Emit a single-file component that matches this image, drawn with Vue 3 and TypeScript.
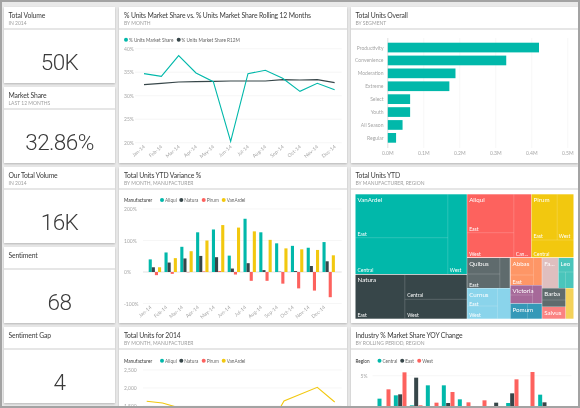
<template>
  <div class="dashboard">
    <template v-for="tile in tiles" :key="tile.title">
      <section class="tile" :class="{ wide: tile.kind !== 'kpi' }">
        <header class="tile-head">
          <h2>{{ tile.title }}</h2>
          <p v-if="tile.sub">{{ tile.sub }}</p>
        </header>

        <div v-if="tile.kind === 'kpi'" class="kpi">{{ tile.value }}</div>

        <svg v-else-if="tile.kind === 'share'" class="chart" viewBox="119 30 227.5 133">
          <circle cx="126" cy="39.7" r="2" :fill="TEAL" />
          <text class="legend" x="129" y="41.5">% Units Market Share</text>
          <circle cx="178.7" cy="39.7" r="2" :fill="DARK" />
          <text class="legend" x="181.5" y="41.5">% Units Market Share R12M</text>
          <g v-for="(t, i) in [40, 35, 30, 25, 20]" :key="t">
            <line class="grid" x1="135" x2="341.7" :y1="48.7 + i * 23.5" :y2="48.7 + i * 23.5" />
            <text class="axis" x="124" :y="50.7 + i * 23.5">{{ t }}%</text>
          </g>
          <text v-for="(m, i) in months" :key="m" class="axis" text-anchor="end"
            :transform="`translate(${145.5 + i * 17.33} 147.5) rotate(-40)`">{{ m }}</text>
          <polyline class="line" :stroke="DARK" :points="shareR12" />
          <polyline class="line" :stroke="TEAL" :points="share" />
        </svg>

        <svg v-else-if="tile.kind === 'segment'" class="chart" viewBox="350.5 30 227.5 133">
          <line v-for="i in 6" :key="i" class="grid" :x1="387.3 + (i - 1) * 36" :x2="387.3 + (i - 1) * 36" y1="38" y2="148" />
          <line x1="387.3" x2="387.3" y1="38" y2="148" stroke="#ccc" stroke-width="0.5" />
          <g v-for="(s, i) in segments" :key="s.name">
            <text class="axis" x="383" text-anchor="end" :y="49.5 + i * 12.9">{{ s.name }}</text>
            <rect :x="387.3" :y="42.7 + i * 12.9" :width="s.value * 360" height="9.7" :fill="TEAL" />
          </g>
          <text v-for="i in 6" :key="i" class="axis" text-anchor="middle" :x="387.3 + (i - 1) * 36" y="154.7">0.{{ i - 1 }}M</text>
        </svg>

        <svg v-else-if="tile.kind === 'variance'" class="chart" viewBox="119 190 227.5 133">
          <text class="legend strong" x="124" y="202">Manufacturer</text>
          <g v-for="l in makers" :key="l.name">
            <circle :cx="l.x" cy="200" r="2" :fill="l.color" />
            <text class="legend" :x="l.x + 3" y="202">{{ l.name }}</text>
          </g>
          <g v-for="(t, i) in [200, 100, 0, -100]" :key="t">
            <line class="grid" :class="{ zero: t === 0 }" x1="143" x2="341.7" :y1="209 + i * 31.5" :y2="209 + i * 31.5" />
            <text class="axis" x="124" :y="211 + i * 31.5">{{ t }}%</text>
          </g>
          <rect v-for="b in varianceBars" :key="b.key" :x="b.x" :y="b.y" width="3.1" :height="b.h" :fill="b.color" />
          <text v-for="(m, i) in months" :key="m" class="axis" text-anchor="end"
            :transform="`translate(${152 + i * 15.8} 308) rotate(-40)`">{{ m }}</text>
        </svg>

        <svg v-else-if="tile.kind === 'treemap'" class="chart" viewBox="350.5 190 227.5 133">
          <rect v-for="r in cells" :key="r.id" :x="r.x" :y="r.y" :width="r.w" :height="r.h" :fill="r.color" />
          <line v-for="(l, i) in cellLines" :key="i" class="cell-line" :x1="l[0]" :y1="l[1]" :x2="l[2]" :y2="l[3]" />
          <text v-for="t in cellLabels" :key="t.id" class="cell-label" :class="{ big: t.big }" :x="t.x" :y="t.y">{{ t.text }}</text>
        </svg>

        <svg v-else-if="tile.kind === 'units'" class="chart" viewBox="119 350 227.5 133">
          <text class="legend strong" x="124" y="362.5">Manufacturer</text>
          <g v-for="l in makers" :key="l.name">
            <circle :cx="l.x" cy="360.7" r="2" :fill="l.color" />
            <text class="legend" :x="l.x + 3" y="362.5">{{ l.name }}</text>
          </g>
          <g v-for="(t, i) in ['2,500', '2,000', '1,500']" :key="t">
            <line class="grid" x1="143" x2="341.7" :y1="370 + i * 18" :y2="370 + i * 18" />
            <text class="axis" x="124" :y="372 + i * 18">{{ t }}</text>
          </g>
          <polyline class="line" :stroke="YELLOW" points="146.7,401.3 162.5,403 178,407.5 200,416 265,416 280,408 284,401 317.3,387.3 334.7,402" />
        </svg>

        <svg v-else class="chart" viewBox="350.5 350 227.5 133">
          <text class="legend strong" x="355" y="362.5">Region</text>
          <g v-for="l in regions" :key="l.name">
            <circle :cx="l.x" cy="360.7" r="2" :fill="l.color" />
            <text class="legend" :x="l.x + 3" y="362.5">{{ l.name }}</text>
          </g>
          <line class="grid" x1="372" x2="571" y1="375.7" y2="375.7" />
          <text class="axis" x="360" y="377.7">5%</text>
          <rect v-for="b in yoyBars" :key="b.key" :x="b.x" :y="b.y" width="4" height="40" :fill="b.color" />
        </svg>
      </section>
    </template>
  </div>
</template>

<script setup lang="ts">
const TEAL = '#01b8aa'
const DARK = '#374649'
const RED = '#fd625e'
const YELLOW = '#f2c80f'

interface Tile {
  title: string
  sub?: string
  kind: string
  value?: string
}

const tiles: Tile[] = [
  { title: 'Total Volume', sub: 'IN 2014', kind: 'kpi', value: '50K' },
  { title: '% Units Market Share vs. % Units Market Share Rolling 12 Months', sub: 'BY MONTH', kind: 'share' },
  { title: 'Total Units Overall', sub: 'BY SEGMENT', kind: 'segment' },
  { title: 'Market Share', sub: 'LAST 12 MONTHS', kind: 'kpi', value: '32.86%' },
  { title: 'Our Total Volume', sub: 'IN 2014', kind: 'kpi', value: '16K' },
  { title: 'Total Units YTD Variance %', sub: 'BY MONTH, MANUFACTURER', kind: 'variance' },
  { title: 'Total Units YTD', sub: 'BY MANUFACTURER, REGION', kind: 'treemap' },
  { title: 'Sentiment', kind: 'kpi', value: '68' },
  { title: 'Sentiment Gap', kind: 'kpi', value: '4' },
  { title: 'Total Units for 2014', sub: 'BY MONTH, MANUFACTURER', kind: 'units' },
  { title: 'Industry % Market Share YOY Change', sub: 'BY ROLLING PERIOD, REGION', kind: 'yoy' }
]

const months = ['Jan-14', 'Feb-14', 'Mar-14', 'Apr-14', 'May-14', 'Jun-14', 'Jul-14', 'Aug-14', 'Sep-14', 'Oct-14', 'Nov-14', 'Dec-14']

const toPoints = (ys: number[]) => ys.map((y, i) => `${144 + i * 17.33},${y / 3}`).join(' ')
const share = toPoints([221, 229, 167, 219, 245, 424, 221, 211, 235, 274, 250, 269])
const shareR12 = toPoints([254, 250, 246, 245, 244, 243, 243, 243, 239, 240, 239, 248])

const segments = [
  { name: 'Productivity', value: 0.42 },
  { name: 'Convenience', value: 0.329 },
  { name: 'Moderation', value: 0.188 },
  { name: 'Extreme', value: 0.171 },
  { name: 'Select', value: 0.062 },
  { name: 'Youth', value: 0.062 },
  { name: 'All Season', value: 0.041 },
  { name: 'Regular', value: 0.023 }
]

const makers = [
  { name: 'Aliqui', color: TEAL, x: 162 },
  { name: 'Natura', color: DARK, x: 181.3 },
  { name: 'Pirum', color: RED, x: 203.7 },
  { name: 'VanArdel', color: YELLOW, x: 223.7 }
]

const regions = [
  { name: 'Central', color: TEAL, x: 379 },
  { name: 'East', color: DARK, x: 401.7 },
  { name: 'West', color: RED, x: 418.7 }
]

// aliqui, natura, pirum, vanardel per month
const variance = [
  [40, 15, -10, 15], [62, 30, -6, 44], [80, 43, -1, 66], [126, 51, 2, 100],
  [135, 47, 3, 149], [52, 11, -8, 141], [169, 28, -28, 129], [126, 6, -28, 102],
  [91, 1, -37, 75], [83, 3, -52, 72], [77, 19, -59, 70], [95, 34, -80, 53]
]
const varianceColors = [TEAL, DARK, RED, YELLOW]
const varianceBars = variance.flatMap((vals, m) =>
  vals.map((v, s) => ({
    key: `${m}-${s}`,
    x: 148.7 + m * 15.8 + s * 3.1,
    y: v >= 0 ? 272 - v * 0.315 : 272,
    h: Math.abs(v) * 0.315,
    color: varianceColors[s]
  }))
)

const yoyRaw: [number, number, string][] = [
  [96, 242, TEAL], [123, 214, RED], [145, 232, TEAL], [158, 229, DARK], [171, 163, RED],
  [193, 262, TEAL], [206, 179, DARK], [219, 262, RED], [241, 202, TEAL], [267, 254, RED],
  [289, 202, TEAL], [302, 255, DARK], [315, 222, RED], [337, 244, TEAL], [363, 253, RED],
  [411, 247, RED], [446, 254, DARK], [482, 255, TEAL], [494, 226, DARK], [507, 184, RED],
  [555, 162, RED], [578, 230, TEAL], [591, 253, DARK]
]
const yoyBars = yoyRaw.map(([x, y, color], i) => ({ key: i, x: 345 + x / 3, y: 318 + y / 3, color }))

const cells = [
  { id: 'vanardel', x: 355, y: 194.3, w: 111.3, h: 79.7, color: TEAL },
  { id: 'natura', x: 355, y: 274.7, w: 111.3, h: 44, color: DARK },
  { id: 'aliqui', x: 466.7, y: 194.3, w: 64, h: 63, color: RED },
  { id: 'pirum', x: 531, y: 194.3, w: 42, h: 63, color: YELLOW },
  { id: 'quibus', x: 466.7, y: 258, w: 42.6, h: 30, color: '#5f6b6d' },
  { id: 'abbas', x: 510, y: 258, w: 31.3, h: 27, color: '#fe9666' },
  { id: 'fa', x: 541.7, y: 258, w: 16, h: 30, color: '#dfbfbf' },
  { id: 'leo', x: 558, y: 258, w: 15, h: 30, color: '#4ac5bb' },
  { id: 'curnus', x: 466.7, y: 288.3, w: 43.3, h: 30.4, color: '#8ad4eb' },
  { id: 'victoria', x: 510, y: 285.3, w: 31.3, h: 18, color: '#a66999' },
  { id: 'pomum', x: 510, y: 303.7, w: 31.3, h: 15, color: '#3599b8' },
  { id: 'barba', x: 541.7, y: 288.3, w: 23.3, h: 18.4, color: '#5f6b6d' },
  { id: 'salvus', x: 541.7, y: 307, w: 23.3, h: 11.7, color: '#fb8281' },
  { id: 'rest', x: 565.3, y: 288.3, w: 7.7, h: 30.4, color: '#f4d25a' }
]

const cellLines = [
  [447.3, 194.3, 447.3, 274], [355, 237.7, 447.3, 237.7],
  [404.3, 274.7, 404.3, 318.7], [404.3, 299.3, 466.3, 299.3],
  [513.3, 194.3, 513.3, 257.3], [466.7, 232.7, 513.3, 232.7],
  [531, 240, 573, 240], [556.7, 194.3, 556.7, 240],
  [499.3, 258, 499.3, 288], [466.7, 274, 499.3, 274],
  [533, 258, 533, 285], [510, 275, 533, 275],
  [497, 288.3, 497, 318.7], [466.7, 306, 497, 306],
  [532, 285.3, 532, 303.7], [510, 295, 532, 295],
  [527, 303.7, 527, 318.7],
  [558, 272, 573, 272], [565, 272, 565, 288],
  [541.7, 300, 565, 300]
]

const cellLabels = [
  { id: 1, text: 'VanArdel', x: 357, y: 201.5, big: true },
  { id: 2, text: 'East', x: 357, y: 236 },
  { id: 3, text: 'Central', x: 357, y: 272 },
  { id: 4, text: 'West', x: 449.3, y: 272 },
  { id: 5, text: 'Natura', x: 357, y: 281.5, big: true },
  { id: 6, text: 'East', x: 357, y: 317 },
  { id: 7, text: 'Central', x: 406.7, y: 297 },
  { id: 8, text: 'West', x: 406.7, y: 317 },
  { id: 9, text: 'Aliqui', x: 468.7, y: 201.5, big: true },
  { id: 10, text: 'East', x: 468.7, y: 231 },
  { id: 11, text: 'West', x: 468.7, y: 255.5 },
  { id: 12, text: 'Can...', x: 515.3, y: 255.5 },
  { id: 13, text: 'Pirum', x: 533, y: 201.5, big: true },
  { id: 14, text: 'East', x: 533, y: 238 },
  { id: 15, text: 'West', x: 558.3, y: 238 },
  { id: 16, text: 'Central', x: 533, y: 255.5 },
  { id: 17, text: 'Quibus', x: 468.7, y: 265.5, big: true },
  { id: 18, text: 'East', x: 468.7, y: 286.5 },
  { id: 19, text: 'Abbas', x: 512, y: 265.5, big: true },
  { id: 20, text: 'East', x: 512, y: 283.5 },
  { id: 21, text: 'Fa...', x: 543.7, y: 265.5, big: true },
  { id: 22, text: 'Leo', x: 560, y: 265.5, big: true },
  { id: 23, text: 'Curnus', x: 468.7, y: 296.5, big: true },
  { id: 24, text: 'East', x: 468.7, y: 306 },
  { id: 25, text: 'West', x: 468.7, y: 316.5 },
  { id: 26, text: 'Victoria', x: 512, y: 292.5, big: true },
  { id: 27, text: 'Pomum', x: 512, y: 311.5, big: true },
  { id: 28, text: 'Barba', x: 543.7, y: 295.5, big: true },
  { id: 29, text: 'Salvus', x: 543.7, y: 314.5, big: true }
]
</script>

<style>
html,
body {
  margin: 0;
  background: #e9e9e9;
}
</style>

<style scoped>
.dashboard {
  box-sizing: border-box;
  width: 580px;
  height: 408px;
  overflow: hidden;
  border: 2px solid #a3a3a3;
  padding: 5px 0 0 2px;
  background: #e9e9e9;
  display: grid;
  grid-template-columns: 111px 227.5px 227.5px;
  grid-auto-rows: 76px;
  gap: 4px;
  font-family: Lato, "Liberation Sans", sans-serif;
  filter: blur(0.3px);
}

.tile {
  display: flex;
  flex-direction: column;
  background: #fff;
  box-shadow: 0 1px 2px rgba(0, 0, 0, 0.22);
  min-width: 0;
}

.tile.wide {
  grid-row: span 2;
}

.tile-head {
  box-sizing: border-box;
  height: 23px;
  flex: none;
  padding: 3px 5px 0 4.5px;
  border-bottom: 2px solid #e6e6e6;
}

.tile.wide .tile-head {
  padding-left: 5px;
}

.tile-head h2 {
  margin: 0;
  font-size: 6.8px;
  line-height: 10px;
  letter-spacing: -0.15px;
  font-weight: 400;
  color: #3b3b3b;
  white-space: nowrap;
}

.tile-head p {
  margin: 0;
  font-size: 5px;
  line-height: 7px;
  color: #a0a0a0;
  white-space: nowrap;
}

.kpi {
  flex: 1;
  display: flex;
  align-items: center;
  justify-content: center;
  padding-top: 10px;
  font-family: Roboto, "Liberation Sans", sans-serif;
  font-weight: 300;
  font-size: 22.5px;
  letter-spacing: -0.6px;
  color: #3a3a3a;
}

.chart {
  display: block;
  width: 100%;
  flex: 1;
  min-height: 0;
  height: 133px;
}

.legend {
  font-size: 4.7px;
  fill: #666;
}

.legend.strong {
  fill: #333;
}

.axis {
  font-size: 5px;
  fill: #a6a6a6;
}

.grid {
  stroke: #f0f0f0;
  stroke-width: 0.6;
}

.grid.zero {
  stroke: #ccc;
}

.line {
  fill: none;
  stroke-width: 1.1;
}

.cell-line {
  stroke: rgba(255, 255, 255, 0.35);
  stroke-width: 0.5;
}

.cell-label {
  font-size: 5px;
  fill: #fff;
}

.cell-label.big {
  font-size: 6.2px;
}
</style>
